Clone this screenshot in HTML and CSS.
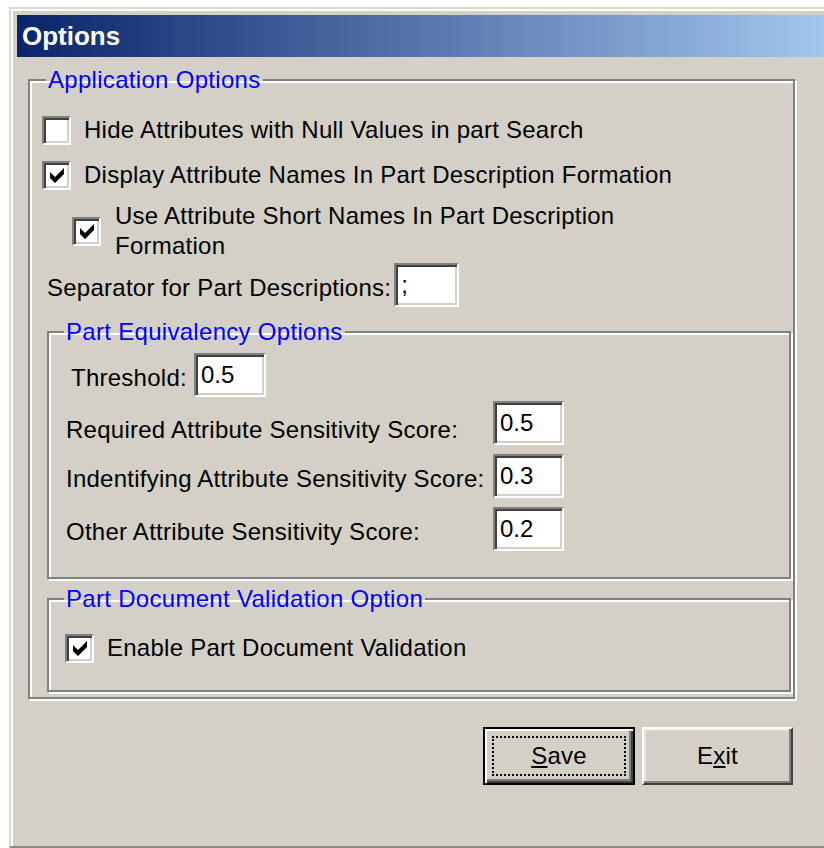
FILE: index.html
```html
<!DOCTYPE html>
<html lang="en">
<head>
<meta charset="utf-8">
<title>Options</title>
<link rel="stylesheet" href="styles.css">
</head>
<body>
<div class="window">
  <div class="titlebar">Options</div>

  <fieldset class="group group-app">
    <legend class="legend-app">Application Options</legend>
    <div class="app-body">
      <label class="check-row">
        <span class="check"></span>
        <span>Hide Attributes with Null Values in part Search</span>
      </label>
      <label class="check-row row-display">
        <span class="check"><svg class="tick" viewBox="0 0 7 7.5" width="16" height="15"><polygon points="0,2 2.5,4.5 7,0 7,3 2.5,7.5 0,5"/></svg></span>
        <span>Display Attribute Names In Part Description Formation</span>
      </label>
      <label class="check-row row-short">
        <span class="check"><svg class="tick" viewBox="0 0 7 7.5" width="16" height="15"><polygon points="0,2 2.5,4.5 7,0 7,3 2.5,7.5 0,5"/></svg></span>
        <span class="wrap-text">Use Attribute Short Names In Part Description Formation</span>
      </label>
      <div class="sep-row">
        <span class="field-label">Separator for Part Descriptions:</span>
        <input class="field field-sep" type="text" value=";" readonly>
      </div>

      <fieldset class="group group-inner group-equiv">
        <legend>Part Equivalency Options</legend>
        <div class="equiv-body">
          <div class="threshold-row">
            <span class="field-label">Threshold:</span>
            <input class="field field-threshold" type="text" value="0.5" readonly>
          </div>
          <div class="score-grid">
            <span class="field-label label-required">Required Attribute Sensitivity Score:</span>
            <input class="field field-score" type="text" value="0.5" readonly>
            <span class="field-label">Indentifying Attribute Sensitivity Score:</span>
            <input class="field field-score" type="text" value="0.3" readonly>
            <span class="field-label">Other Attribute Sensitivity Score:</span>
            <input class="field field-score" type="text" value="0.2" readonly>
          </div>
        </div>
      </fieldset>

      <fieldset class="group group-inner group-docval">
        <legend>Part Document Validation Option</legend>
        <div class="docval-body">
          <label class="check-row">
            <span class="check"><svg class="tick" viewBox="0 0 7 7.5" width="16" height="15"><polygon points="0,2 2.5,4.5 7,0 7,3 2.5,7.5 0,5"/></svg></span>
            <span>Enable Part Document Validation</span>
          </label>
        </div>
      </fieldset>
    </div>
  </fieldset>

  <div class="buttons">
    <button class="btn btn-default" type="button"><span class="focus"><u>S</u>ave</span></button>
    <button class="btn btn-exit" type="button">E<u>x</u>it</button>
  </div>
</div>
</body>
</html>
```

FILE: styles.css
```css
html, body {
  margin: 0;
  background: #fff;
}

body {
  overflow: hidden;
  font-family: "Liberation Sans", Arial, sans-serif;
  font-size: 24px;
  letter-spacing: 0.25px;
  color: #000;
}

/* dialog frame */
.window {
  box-sizing: border-box;
  width: 840px;
  height: 841px;
  margin: 7px 0 0 9px;
  padding: 6px;
  background: #d4d0c8;
  border: 2px solid;
  border-color: #dcd9d2 #404040 #8a8a8a #dcd9d2;
  box-shadow: inset 2px 2px 0 #fff;
}

.titlebar {
  height: 42px;
  line-height: 42px;
  padding-left: 5px;
  background: linear-gradient(to right, #0a246a, #a6caf0);
  color: #fff;
  font-weight: bold;
  font-size: 26px;
  letter-spacing: 0;
}

/* etched group boxes */
.group {
  box-sizing: border-box;
  margin: 0;
  padding: 0;
  min-width: 0;
  border: 2px solid #808080;
  box-shadow: inset 2px 2px 0 #fff, 2px 2px 0 #fff;
}

.group legend {
  padding: 0 2px;
  margin-left: 15px;
  line-height: 26px;
  font-size: 24px;
  letter-spacing: 0.3px;
  color: #0000ff;
}

.group .legend-app {
  margin-left: 16px;
}

.group-app {
  width: 767px;
  margin: 10px 0 0 11px;
}

.app-body {
  padding: 22px 2px 5px 12px;
}

/* checkboxes */
.check-row {
  display: flex;
  align-items: center;
  gap: 13px;
  line-height: 30px;
}

.row-display {
  margin-top: 15px;
}

.row-short {
  margin-top: 11px;
  margin-left: 30px;
  gap: 14px;
}

.wrap-text {
  width: 540px;
}

.check {
  box-sizing: border-box;
  flex: none;
  width: 29px;
  height: 29px;
  display: flex;
  align-items: center;
  justify-content: center;
  background: #fff;
  border: 2px solid;
  border-color: #808080 #fff #fff #808080;
  box-shadow: inset 2px 2px 0 #404040, inset -2px -2px 0 #d4d0c8;
}

.tick {
  display: block;
  fill: #000;
}

/* text fields */
.field-label {
  line-height: 30px;
  padding-top: 6px;
  white-space: nowrap;
}

.field {
  box-sizing: border-box;
  height: 44px;
  margin: 0;
  padding: 0 0 0 5px;
  background: #fff;
  color: #000;
  font: 24px "Liberation Sans", Arial, sans-serif;
  border: 2px solid;
  border-color: #808080 #fff #fff #808080;
  box-shadow: inset 2px 2px 0 #404040, inset -2px -2px 0 #d4d0c8;
  outline: none;
}

.sep-row {
  display: flex;
  align-items: center;
  gap: 3px;
  margin: 2px 0 0 5px;
}

.field-sep {
  width: 65px;
}

.group-inner {
  margin-left: 5px;
}

.group-equiv {
  margin-top: 12px;
}

.equiv-body {
  padding: 8px 0 26px 17px;
}

.threshold-row {
  display: flex;
  align-items: center;
  gap: 7px;
  margin-left: 5px;
}

.field-threshold {
  width: 72px;
}

.score-grid {
  display: grid;
  grid-template-columns: 427px 71px;
  align-items: center;
  row-gap: 9px;
  margin-top: 4px;
}

.field-score {
  width: 71px;
}

.score-grid .label-required {
  padding-top: 14px;
}

.group-docval {
  margin-top: 7px;
}

.docval-body {
  padding: 21px 0 27px 16px;
}

/* command buttons */
.buttons {
  box-sizing: border-box;
  display: flex;
  justify-content: flex-end;
  gap: 7px;
  width: 767px;
  margin: 28px 0 0 11px;
  padding-right: 2px;
}

.btn {
  box-sizing: border-box;
  height: 58px;
  margin: 0;
  padding: 0;
  background: #d4d0c8;
  color: #000;
  font: 24px "Liberation Sans", Arial, sans-serif;
  letter-spacing: 0.25px;
  display: flex;
  align-items: center;
  justify-content: center;
  cursor: default;
}

.btn-exit {
  width: 151px;
  border: 2px solid;
  border-color: #fff #404040 #404040 #fff;
  box-shadow: inset -2px -2px 0 #808080, inset 2px 2px 0 #e6e4df;
}

.btn-default {
  width: 152px;
  padding: 7px;
  border: 2px solid #000;
  box-shadow: inset 2px 2px 0 #fff, inset -2px -2px 0 #404040, inset -4px -4px 0 #808080;
  align-items: stretch;
}

.focus {
  flex: 1;
  display: flex;
  align-items: center;
  justify-content: center;
  border: 2px dotted #000;
}
```
